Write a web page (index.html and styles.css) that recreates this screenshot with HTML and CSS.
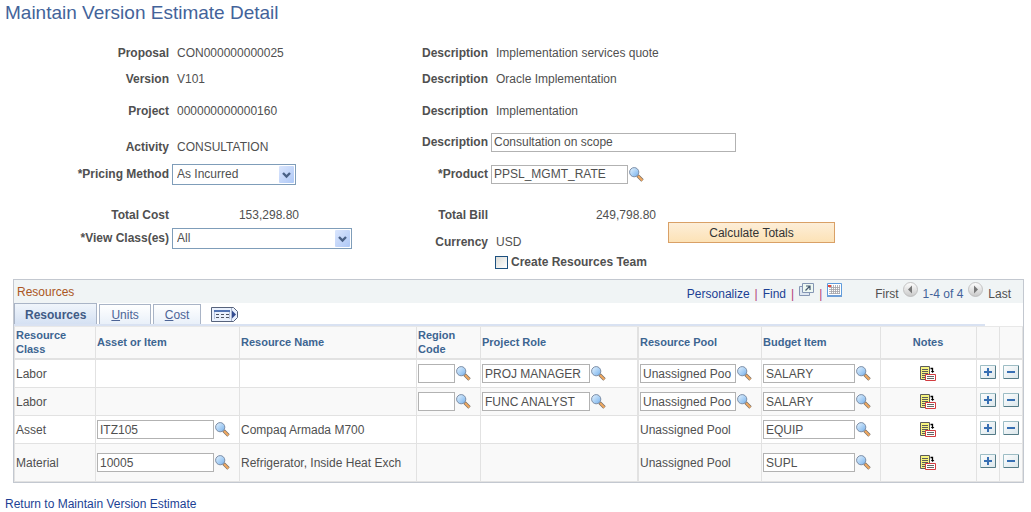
FILE: index.html
```html
<!DOCTYPE html>
<html lang="en">
<head>
<meta charset="utf-8">
<title>Maintain Version Estimate Detail</title>
<link rel="stylesheet" href="styles.css">
</head>
<body>
<svg class="defs" aria-hidden="true">
  <defs>
    <linearGradient id="lens" x1="0" y1="0" x2="1" y2="1"><stop offset="0" stop-color="#e8f5ff"/><stop offset="1" stop-color="#74b0ec"/></linearGradient>
    <linearGradient id="face" x1="0" y1="0" x2="0" y2="1"><stop offset="0" stop-color="#ffffff"/><stop offset="1" stop-color="#c8c8c8"/></linearGradient>
    <linearGradient id="drop" x1="0" y1="0" x2="1" y2="1"><stop offset="0" stop-color="#dbe6fd"/><stop offset="1" stop-color="#aec8f6"/></linearGradient>
    <linearGradient id="key" x1="0" y1="0" x2="1" y2="1"><stop offset="0" stop-color="#ffffff"/><stop offset="1" stop-color="#d9e5ea"/></linearGradient>
  </defs>
  <symbol id="i-find" viewBox="0 0 15 15">
    <path d="M8.5 8.5l5 5" stroke="#77716c" stroke-width="3.4"/>
    <path d="M9 9l4.4 4.4" stroke="#f0a860" stroke-width="2.1"/>
    <circle cx="5.2" cy="5.2" r="4.6" fill="url(#lens)" stroke="#7d8ea6" stroke-width="1"/>
  </symbol>
  <symbol id="i-drop" viewBox="0 0 15 17">
    <rect width="15" height="17" rx="1" fill="url(#drop)"/>
    <path d="M4 7l3.5 3.5L11 7" fill="none" stroke="#4a6186" stroke-width="2.4"/>
  </symbol>
  <symbol id="i-note" viewBox="0 0 16 15">
    <path d="M.5.5h9v13h-9z" fill="#f7f47f" stroke="#5c5c5c"/>
    <path d="M2 3.5h6M2 5.5h6M2 7.5h6M2 9.5h3M2 11.5h3" stroke="#5c5c5c"/>
    <path d="M10.5 2.5h2V6" fill="none" stroke="#000" stroke-width="1.3"/><path d="M10.8 5h3.6l-1.8 2z" fill="#000"/>
    <path d="M5.5 8.5h10v6h-10z" fill="#fff" stroke="#d23c40"/>
    <path d="M7 10.5h7M7 12.5h7" stroke="#666"/>
  </symbol>
  <symbol id="i-plus" viewBox="0 0 16 14">
    <path d="M0 0h16v14H0z" fill="url(#key)"/><path d="M.5 14V.5H16" fill="none" stroke="#9dbdc5"/><path d="M1 13.5h14.5V1" fill="none" stroke="#557b86"/>
    <path d="M4 7h8M8 3v8" stroke="#376fb3" stroke-width="2"/>
  </symbol>
  <symbol id="i-minus" viewBox="0 0 16 14">
    <path d="M0 0h16v14H0z" fill="url(#key)"/><path d="M.5 14V.5H16" fill="none" stroke="#9dbdc5"/><path d="M1 13.5h14.5V1" fill="none" stroke="#557b86"/>
    <path d="M4 7h8" stroke="#376fb3" stroke-width="2"/>
  </symbol>
</svg>

<h1 class="title">Maintain Version Estimate Detail</h1>

<form class="form">
  <div class="form-col form-left">
    <div class="row"><span class="label">Proposal</span><span class="value">CON000000000025</span></div>
    <div class="row gap-s"><span class="label">Version</span><span class="value">V101</span></div>
    <div class="row gap-l"><span class="label">Project</span><span class="value">000000000000160</span></div>
    <div class="row gap-xl"><span class="label">Activity</span><span class="value">CONSULTATION</span></div>
    <div class="row gap-m"><label class="label" for="pricing">*Pricing Method</label><span class="select select-short"><select id="pricing"><option>As Incurred</option></select><svg class="drop"><use href="#i-drop"/></svg></span></div>
    <div class="row gap-xxl"><span class="label">Total Cost</span><span class="value amount-cost">153,298.80</span></div>
    <div class="row gap-xs"><label class="label" for="classes">*View Class(es)</label><span class="select select-long"><select id="classes"><option>All</option></select><svg class="drop"><use href="#i-drop"/></svg></span></div>
  </div>
  <div class="form-col form-right">
    <div class="row"><span class="label">Description</span><span class="value">Implementation services quote</span></div>
    <div class="row gap-s"><span class="label">Description</span><span class="value">Oracle Implementation</span></div>
    <div class="row gap-l"><span class="label">Description</span><span class="value">Implementation</span></div>
    <div class="row gap-ml"><label class="label" for="description">Description</label><input class="field w-description" id="description" type="text" value="Consultation on scope"></div>
    <div class="row gap-l"><label class="label" for="product">*Product</label><input class="field w-product" id="product" type="text" value="PPSL_MGMT_RATE"><button type="button" class="icon-btn" aria-label="Look up product"><svg class="find"><use href="#i-find"/></svg></button></div>
    <div class="row gap-xxl"><span class="label">Total Bill</span><span class="value amount-bill">249,798.80</span></div>
    <div class="row gap-m"><span class="label">Currency</span><span class="value">USD</span></div>
    <div class="row"><input class="check" id="team" type="checkbox"><label class="check-label" for="team">Create Resources Team</label></div>
  </div>
  <button type="button" class="calculate">Calculate Totals</button>
</form>

<section class="grid">
  <header class="bar">
    <h2 class="caption">Resources</h2>
    <a href="#">Personalize</a><span class="sep">|</span><a href="#">Find</a><span class="sep">|</span>
    <button type="button" class="icon-btn tool" aria-label="View all"><svg width="15" height="14" viewBox="0 0 15 14"><path d="M.5 3.5h10v9H.5z" fill="#dfe7f1" stroke="#8596b4"/><path d="M3.5.5h11v9h-11z" fill="#eef8f2" stroke="#8596b4"/><path d="M6.5 7.5l4-4M7 3h4v4" fill="none" stroke="#44586f" stroke-width="1.2"/></svg></button>
    <span class="sep">|</span>
    <button type="button" class="icon-btn tool" aria-label="Download"><svg width="15" height="14" viewBox="0 0 15 14"><path d="M.5.5h14v12H.5z" fill="#fff" stroke="#5f9bdc"/><path d="M0 13h15" stroke="#6e9fd8" stroke-width="2"/><path d="M2 4.5h11M2 6.5h11M2 8.5h11M2 10.5h11M4.5 2v9M6.5 2v9M8.5 2v9M10.5 2v9M12.5 2v9" stroke="#a2a2a8" stroke-width=".8"/><path d="M1 2h3v2H1z" fill="#e5483d"/></svg></button>
    <span class="first">First</span>
    <button type="button" class="icon-btn nav" aria-label="Previous"><svg width="15" height="15" viewBox="0 0 15 15"><circle cx="7.5" cy="7.5" r="7" fill="url(#face)" stroke="#b8b8b8" stroke-width=".8"/><path d="M9 3.5v8l-4-4z" fill="#777"/></svg></button>
    <span class="count">1-4 of 4</span>
    <button type="button" class="icon-btn nav" aria-label="Next"><svg width="15" height="15" viewBox="0 0 15 15"><circle cx="7.5" cy="7.5" r="7" fill="url(#face)" stroke="#b8b8b8" stroke-width=".8"/><path d="M6 3.5v8l4-4z" fill="#777"/></svg></button>
    <span class="last">Last</span>
  </header>
  <nav class="tabs">
    <a class="tab tab-on" href="#">Resources</a>
    <a class="tab" href="#"><u>U</u>nits</a>
    <a class="tab" href="#"><u>C</u>ost</a>
    <button type="button" class="icon-btn show-all" aria-label="Show all columns"><svg width="27" height="15" viewBox="0 0 27 15"><path d="M.5.5h22l4 4v6l-4 4H.5z" fill="#eaf1fd" stroke="#57637c"/><path d="M20.5 1v13" stroke="#a9b6cf"/><path d="M3 3h16v2H3z" fill="#5274b4"/><path d="M3.5 5v7M18.5 5v7" stroke="#b7c4df"/><path d="M5 7.5h3m2 0h3m2 0h3M5 10.5h3m2 0h3m2 0h3" stroke="#4c5363"/><path d="M21 3.5v8l4-4z" fill="#354d91"/></svg></button>
  </nav>
  <table class="table">
    <colgroup><col class="c-class"><col class="c-item"><col class="c-name"><col class="c-region"><col class="c-role"><col class="c-pool"><col class="c-budget"><col class="c-notes"><col class="c-act"><col class="c-act"></colgroup>
    <thead>
      <tr><th>Resource Class</th><th>Asset or Item</th><th>Resource Name</th><th>Region Code</th><th>Project Role</th><th>Resource Pool</th><th>Budget Item</th><th class="center">Notes</th><td></td><td></td></tr>
    </thead>
    <tbody>
      <tr>
        <td>Labor</td><td></td><td></td>
        <td><div class="cell"><input class="field w-region" type="text" aria-label="Region code"><button type="button" class="icon-btn" aria-label="Look up"><svg class="find"><use href="#i-find"/></svg></button></div></td>
        <td><div class="cell"><input class="field w-role" type="text" aria-label="Project role" value="PROJ MANAGER"><button type="button" class="icon-btn" aria-label="Look up"><svg class="find"><use href="#i-find"/></svg></button></div></td>
        <td><div class="cell"><input class="field w-pool" type="text" aria-label="Resource pool" value="Unassigned Poo"><button type="button" class="icon-btn" aria-label="Look up"><svg class="find"><use href="#i-find"/></svg></button></div></td>
        <td><div class="cell"><input class="field w-budget" type="text" aria-label="Budget item" value="SALARY"><button type="button" class="icon-btn" aria-label="Look up"><svg class="find"><use href="#i-find"/></svg></button></div></td>
        <td class="center"><button type="button" class="icon-btn" aria-label="Notes"><svg class="note"><use href="#i-note"/></svg></button></td>
        <td class="act"><button type="button" class="icon-btn" aria-label="Add row"><svg class="key"><use href="#i-plus"/></svg></button></td>
        <td class="act"><button type="button" class="icon-btn" aria-label="Delete row"><svg class="key"><use href="#i-minus"/></svg></button></td>
      </tr>
      <tr>
        <td>Labor</td><td></td><td></td>
        <td><div class="cell"><input class="field w-region" type="text" aria-label="Region code"><button type="button" class="icon-btn" aria-label="Look up"><svg class="find"><use href="#i-find"/></svg></button></div></td>
        <td><div class="cell"><input class="field w-role" type="text" aria-label="Project role" value="FUNC ANALYST"><button type="button" class="icon-btn" aria-label="Look up"><svg class="find"><use href="#i-find"/></svg></button></div></td>
        <td><div class="cell"><input class="field w-pool" type="text" aria-label="Resource pool" value="Unassigned Poo"><button type="button" class="icon-btn" aria-label="Look up"><svg class="find"><use href="#i-find"/></svg></button></div></td>
        <td><div class="cell"><input class="field w-budget" type="text" aria-label="Budget item" value="SALARY"><button type="button" class="icon-btn" aria-label="Look up"><svg class="find"><use href="#i-find"/></svg></button></div></td>
        <td class="center"><button type="button" class="icon-btn" aria-label="Notes"><svg class="note"><use href="#i-note"/></svg></button></td>
        <td class="act"><button type="button" class="icon-btn" aria-label="Add row"><svg class="key"><use href="#i-plus"/></svg></button></td>
        <td class="act"><button type="button" class="icon-btn" aria-label="Delete row"><svg class="key"><use href="#i-minus"/></svg></button></td>
      </tr>
      <tr>
        <td>Asset</td>
        <td><div class="cell"><input class="field w-item" type="text" aria-label="Asset or item" value="ITZ105"><button type="button" class="icon-btn" aria-label="Look up"><svg class="find"><use href="#i-find"/></svg></button></div></td>
        <td>Compaq Armada M700</td><td></td><td></td><td>Unassigned Pool</td>
        <td><div class="cell"><input class="field w-budget" type="text" aria-label="Budget item" value="EQUIP"><button type="button" class="icon-btn" aria-label="Look up"><svg class="find"><use href="#i-find"/></svg></button></div></td>
        <td class="center"><button type="button" class="icon-btn" aria-label="Notes"><svg class="note"><use href="#i-note"/></svg></button></td>
        <td class="act"><button type="button" class="icon-btn" aria-label="Add row"><svg class="key"><use href="#i-plus"/></svg></button></td>
        <td class="act"><button type="button" class="icon-btn" aria-label="Delete row"><svg class="key"><use href="#i-minus"/></svg></button></td>
      </tr>
      <tr class="tall">
        <td>Material</td>
        <td><div class="cell"><input class="field w-item" type="text" aria-label="Asset or item" value="10005"><button type="button" class="icon-btn" aria-label="Look up"><svg class="find"><use href="#i-find"/></svg></button></div></td>
        <td>Refrigerator, Inside Heat Exch</td><td></td><td></td><td>Unassigned Pool</td>
        <td><div class="cell"><input class="field w-budget" type="text" aria-label="Budget item" value="SUPL"><button type="button" class="icon-btn" aria-label="Look up"><svg class="find"><use href="#i-find"/></svg></button></div></td>
        <td class="center"><button type="button" class="icon-btn" aria-label="Notes"><svg class="note"><use href="#i-note"/></svg></button></td>
        <td class="act"><button type="button" class="icon-btn" aria-label="Add row"><svg class="key"><use href="#i-plus"/></svg></button></td>
        <td class="act"><button type="button" class="icon-btn" aria-label="Delete row"><svg class="key"><use href="#i-minus"/></svg></button></td>
      </tr>
    </tbody>
  </table>
</section>

<a class="return" href="#">Return to Maintain Version Estimate</a>
</body>
</html>
```
FILE: styles.css
```css
* { box-sizing: border-box; }

body {
  margin: 0;
  padding: 0 7px 0 5px;
  background: #fff;
  color: #505050;
  font: 12px/14px "Liberation Sans", Arial, sans-serif;
}

a { color: #1c3f94; text-decoration: none; }
input, select, button { font: inherit; color: inherit; }
svg { display: block; }
.defs { position: absolute; width: 0; height: 0; }

.title {
  margin: 0;
  padding-bottom: 17px;
  color: #43639a;
  font-size: 19px;
  font-weight: normal;
  line-height: 26px;
}

/* Header fields */
.form { display: flex; align-items: flex-start; }
.form-left { flex: 0 0 410px; }
.form-right { flex: 0 0 253px; min-width: 0; }
.row { display: flex; align-items: center; height: 20px; }
.gap-xs { margin-top: 3px; }
.gap-s { margin-top: 6px; }
.gap-m { margin-top: 7px; }
.gap-ml { margin-top: 11px; }
.gap-l { margin-top: 12px; }
.gap-xl { margin-top: 16px; }
.gap-xxl { margin-top: 21px; }

.label { flex: none; width: 164px; margin-right: 3px; text-align: right; font-weight: bold; }
.form-right .label { width: 73px; }
.value { margin-left: 5px; white-space: nowrap; }
.amount-cost { width: 122px; text-align: right; }
.amount-bill { width: 160px; text-align: right; }

.field {
  flex: none;
  height: 19px;
  margin: 0;
  padding: 0 2px;
  border: 1px solid #b2b2b2;
  border-radius: 0;
  background: #fff;
}
.w-description { width: 245px; }
.w-product { width: 137px; }
.w-item { width: 117px; }
.w-region { width: 37px; }
.w-role { width: 108px; }
.w-pool { width: 96px; }
.w-budget { width: 92px; }

.select { position: relative; }
.select select {
  width: 100%;
  height: 21px;
  padding: 0 18px 0 4px;
  border: 1px solid #7f9db9;
  border-radius: 0;
  background: #fff;
  appearance: none;
}
.select-short { width: 124px; }
.select-long { width: 180px; }
.drop { position: absolute; top: 2px; right: 2px; width: 15px; height: 17px; pointer-events: none; }

.check {
  flex: none;
  width: 13px;
  height: 13px;
  margin: 0 3px 0 80px;
  border: 1px solid #1d5180;
  background: linear-gradient(135deg, #dcdcd7, #fff);
  appearance: none;
}
.check:checked { background: #1d5180; }
.check-label { font-weight: bold; white-space: nowrap; }

.calculate {
  flex: none;
  width: 167px;
  height: 21px;
  margin-top: 179px;
  padding: 0;
  border: 1px solid #d9a066;
  background: linear-gradient(#fdeed8, #fce2b6);
  color: #333;
}

.icon-btn { flex: none; display: block; padding: 0; border: 0; background: none; }
.find { width: 15px; height: 15px; margin-left: 1px; }
.note { width: 16px; height: 15px; }
.key { width: 16px; height: 14px; margin-bottom: 3px; }

/* Resources grid */
.grid { margin: 7px 0 0 8px; border: 1px solid #c3c8d0; }

.bar {
  display: flex;
  align-items: flex-end;
  height: 23px;
  padding: 0 12px 2px 3px;
  background: #f0f4f5;
}
.caption { flex: 1; margin: 0; color: #ab5623; font-size: 12px; font-weight: normal; line-height: 18px; }
.sep { margin: 0 5px; color: #b33c78; }
.tool { align-self: flex-start; margin-top: 3px; }
.nav { align-self: flex-start; margin-top: 2px; }
.first { margin: 0 4px 0 33px; }
.count { margin: 0 5px; color: #43639a; }
.last { margin-left: 5px; }

.tabs {
  display: flex;
  align-items: flex-end;
  gap: 2px;
  margin-right: 38px;
  border-bottom: 2px solid #d9e2f2;
}
.tab {
  height: 20px;
  padding: 3px 11px 0;
  border: 1px solid #a9b4c6;
  border-width: 1px 1px 0;
  background: linear-gradient(#fff, #e9f0f9);
  color: #4c6496;
}
.tab-on {
  height: 21px;
  padding: 4px 10px 0;
  background: linear-gradient(#f0f5fb, #d5e1f3);
  color: #3f5a85;
  font-weight: bold;
}
.show-all { margin: 0 0 2px 8px; }

.table { width: 100%; table-layout: fixed; border-collapse: separate; border-spacing: 0; border-left: 1px solid #e2e2e2; border-top: 1px solid #e8e8e8; }
.c-class { width: 81px; }
.c-item { width: 144px; }
.c-name { width: 177px; }
.c-region { width: 64px; }
.c-role { width: 158px; }
.c-pool { width: 123px; }
.c-budget { width: 119px; }
.c-notes { width: 96px; }
.c-act { width: 23px; }

th, td {
  height: 28px;
  padding: 0 0 0 1px;
  border-right: 1px solid #e2e2e2;
  border-bottom: 1px solid #e2e2e2;
  text-align: left;
  vertical-align: middle;
}
thead th, thead td { height: 33px; padding-bottom: 1px; border-bottom-width: 2px; background: #f9f9f9; color: #3d6591; font-size: 11px; }
tbody tr:nth-child(even) { background: #f9f9f9; }
.tall td { height: 38px; }
th:nth-child(5), td:nth-child(5) { border-right-width: 2px; }
.cell { display: flex; align-items: center; }
.center { padding-right: 2px; text-align: center; }
.center .icon-btn { margin: 0 auto; }
.act { padding-left: 3px; }

.return { display: inline-block; margin-top: 14px; }
```
